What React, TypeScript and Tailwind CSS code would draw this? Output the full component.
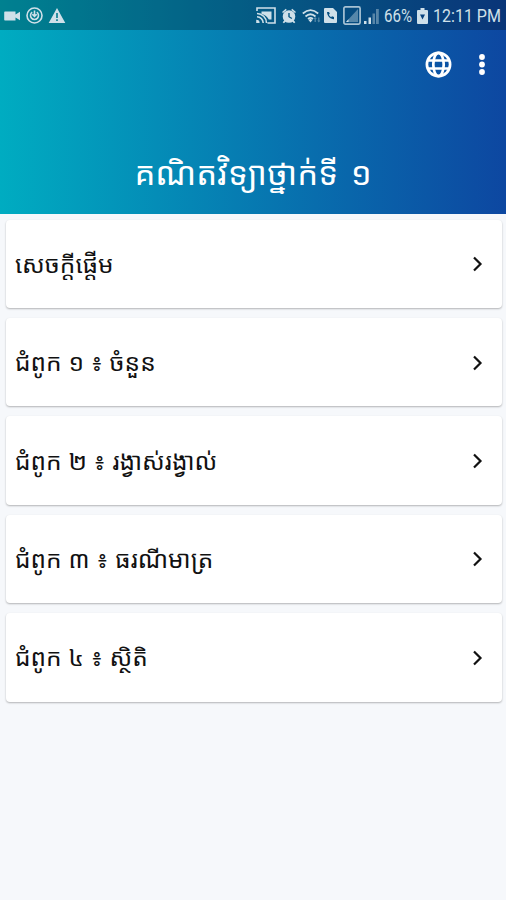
import type { ReactNode } from "react";

const khmerFont = "font-['Noto_Sans_Khmer','Khmer_OS','Noto_Sans',sans-serif]";

const chapters = [
  { id: "intro", title: "សេចក្តីផ្តើម" },
  { id: "ch1", title: "ជំពូក ១ ៖ ចំនួន" },
  { id: "ch2", title: "ជំពូក ២ ៖ រង្វាស់រង្វាល់" },
  { id: "ch3", title: "ជំពូក ៣ ៖ ធរណីមាត្រ" },
  { id: "ch4", title: "ជំពូក ៤ ៖ ស្ថិតិ" },
];

const Icon = ({ className, viewBox = "0 0 24 24", children }: { className: string; viewBox?: string; children: ReactNode }) => (
  <svg className={`shrink-0 ${className}`} viewBox={viewBox} fill="currentColor" aria-hidden="true">
    {children}
  </svg>
);

const StatusBar = () => (
  <div className="flex h-[30px] items-center bg-black/25 pl-1 pr-[5px] pt-px text-[#cfe0e9]">
    <Icon className="h-3 w-[17px]" viewBox="0 0 17 12">
      <path d="M1 1.500h10.500v3l4.500-2.700v8.400l-4.500-2.700v3H1a.8.8 0 0 1-.8-.8V2.300A.8.8 0 0 1 1 1.500z" />
    </Icon>
    <Icon className="ml-[5px] h-[17px] w-[17px]" viewBox="0 0 17 17">
      <g fill="none" stroke="currentColor" strokeWidth="1.600">
        <circle cx="8.500" cy="8.500" r="7.500" />
        <path d="M6.200 5.200a4 4 0 1 0 4.600 0M8.500 3.500V9M6.300 7.200l2.200 2.200 2.200-2.200" />
      </g>
    </Icon>
    <Icon className="ml-[5px] h-[17px] w-[18px]" viewBox="0 0 18 17">
      <path fillRule="evenodd" d="M9 1 17.300 16H.7zM8.200 6v5h1.600V6zm0 6.300v1.700h1.600v-1.700z" />
    </Icon>

    <Icon className="ml-auto h-[17px] w-5" viewBox="0 0 20 17">
      <g fill="none" stroke="currentColor" strokeWidth="1.600">
        <path d="M1 4V1h18v15h-7.500M1 6.500A9.500 9.500 0 0 1 10.500 16M1 9.800A6.200 6.200 0 0 1 7.200 16" />
      </g>
      <path d="M5.500 4.500h10v8h-2.700c-1.200-2.700-4-5.100-7.300-5.600zM.2 12.700A3.300 3.300 0 0 1 3.600 16H.2z" />
    </Icon>
    <Icon className="ml-[5px] h-4 w-4" viewBox="0 0 16 16">
      <path d="M4.800.7 1 3.900l1 1.200 3.800-3.200zM11.200.7 15 3.900l-1 1.200-3.800-3.200z" />
      <path fillRule="evenodd" d="M8 2.200a6.300 6.300 0 1 0 0 12.600A6.300 6.300 0 0 0 8 2.200zM7.300 5h1.400v3.500l2.500 1.500-.7 1.100-3.200-2z" />
      <path d="m3.500 12-1.800 2.300 1.200 1L5 13.500zM12.500 12l1.800 2.300-1.200 1-2.100-1.800z" />
    </Icon>
    <Icon className="ml-[5px] h-4 w-[19px]" viewBox="0 0 19 16">
      <g fill="none" stroke="currentColor" strokeWidth="1.700">
        <path d="M.8 5.500q7.700-6.800 15.400 0M3.500 8.500q5-4.500 10 0M6 11q2.500-2.200 5 0" />
      </g>
      <path d="m6.500 12 2-1.300 2 1.300-2 2.500z" />
      <path d="m13.200 9 1.600 2h-1v3h-1.200v-3h-1zm3.600 5.500-1.600-2h1v-3h1.200v3h1z" opacity=".4" />
    </Icon>
    <Icon className="ml-[3px] h-[15px] w-[13px]" viewBox="0 0 13 15">
      <path fillRule="evenodd" d="M1 0h8l4 4v10a1 1 0 0 1-1 1H1a1 1 0 0 1-1-1V1a1 1 0 0 1 1-1zm2 4c.3 4.200 2.800 7 7 7.300V9L8 8.200l-1 1C6 8.600 5.300 7.800 4.800 6.800l1-1L5 4z" />
    </Icon>
    <Icon className="ml-1.5 h-[19px] w-[18px]" viewBox="0 0 18 19">
      <rect x=".9" y=".9" width="16.200" height="17.200" rx="1.500" fill="none" stroke="currentColor" strokeWidth="1.700" opacity=".8" />
      <path d="M3 16 15 3v13z" opacity=".4" />
      <path d="m3 16 2.500-2.700V16z" />
    </Icon>
    <Icon className="ml-[3px] h-4 w-[15px]" viewBox="0 0 15 16">
      <path d="M0 13h2.500v3H0zM4.500 9.500H7V16H4.500z" />
      <path d="M8.500 5.500H11V16H8.500zM12 1h2.800v15H12z" opacity=".4" />
    </Icon>
    <span className="ml-[5px] w-[29px] whitespace-nowrap font-['Roboto',sans-serif] text-[18px] leading-none">
      <span className="inline-block origin-left scale-x-[0.84]">66%</span>
    </span>
    <Icon className="ml-1 h-4 w-[11px]" viewBox="0 0 11 16">
      <path fillRule="evenodd" d="M3.500 0h4v2H10a1 1 0 0 1 1 1v12a1 1 0 0 1-1 1H1a1 1 0 0 1-1-1V3a1 1 0 0 1 1-1h2.500zM3 6.500l2.500 5L8 6.500z" />
    </Icon>
    <span className="ml-[5px] w-[68px] whitespace-nowrap font-['Roboto',sans-serif] text-[18px] leading-none">
      <span className="inline-block origin-left scale-x-[0.89]">12:11 PM</span>
    </span>
  </div>
);

const Header = () => (
  <header className="h-[214px] bg-linear-to-r/srgb from-[#00acc1] to-[#0d47a1]">
    <StatusBar />
    <div className="flex h-[69px] items-center justify-end pr-5 text-white">
      <button type="button" aria-label="Language">
        <Icon className="block h-[27px] w-[27px]" viewBox="0 0 27 27">
          <g fill="none" stroke="currentColor" strokeWidth="2.700">
            <circle cx="13.500" cy="13.500" r="11.600" />
            <ellipse cx="13.500" cy="13.500" rx="5.200" ry="11.600" />
            <path d="M3 9.500h21M3 17.500h21" />
          </g>
        </Icon>
      </button>
      <button type="button" aria-label="More options" className="ml-[26px]">
        <Icon className="block h-[21px] w-2" viewBox="0 0 8 21">
          <circle cx="4" cy="3" r="2.900" />
          <circle cx="4" cy="10.500" r="2.900" />
          <circle cx="4" cy="18" r="2.900" />
        </Icon>
      </button>
    </div>
    <h1 className={`pt-[49px] text-center text-[33px] leading-[50px] text-white [word-spacing:4px] ${khmerFont}`}>
      គណិតវិទ្យាថ្នាក់ទី ១
    </h1>
  </header>
);

const App = () => {
  return (
    <div className="h-[900px] w-[506px] overflow-hidden bg-[#f6f8fb]">
      <Header />
      <main className="flex flex-col gap-[9.900px] pl-1.5 pr-1 pt-[5.500px]">
        {chapters.map((chapter) => (
          <button
            key={chapter.id}
            type="button"
            className="flex h-[88.500px] w-full items-center justify-between rounded-[4px] bg-white pl-[9px] pr-[19px] text-left text-[#111] shadow-[0_1px_2px_rgba(0,0,0,0.28)]"
          >
            <span className={`whitespace-nowrap text-[24.500px] leading-10 [word-spacing:0.5px] ${khmerFont}`}>{chapter.title}</span>
            <Icon className="mt-px h-4 w-[11px]" viewBox="0 0 11 16">
              <path d="m2 1.500 6.500 6.500L2 14.500" fill="none" stroke="currentColor" strokeWidth="2.200" />
            </Icon>
          </button>
        ))}
      </main>
    </div>
  );
};

export default App;
